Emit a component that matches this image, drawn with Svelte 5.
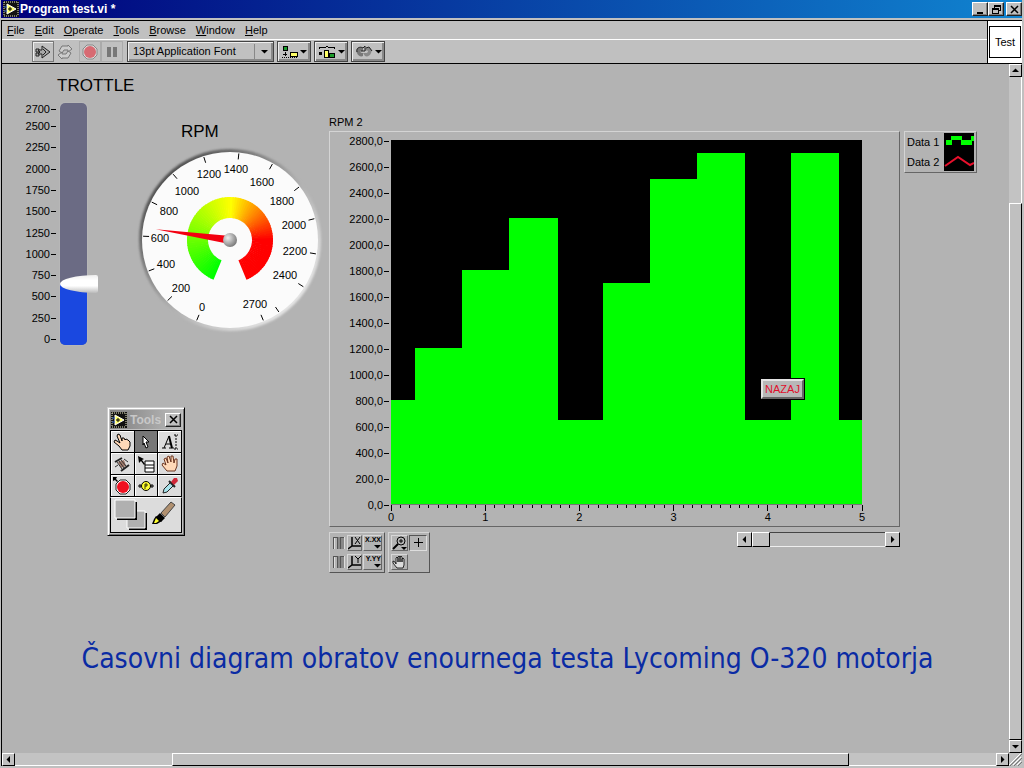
<script lang="ts">
  interface Point {
    x: number;
    y: number;
  }

  interface DialLabel extends Point {
    value: number;
  }

  const menus = ['File', 'Edit', 'Operate', 'Tools', 'Browse', 'Window', 'Help'];

  const MAX_RPM = 2700;
  let throttle = $state(650);

  // throttle scale
  const throttleMarks = [2700, 2500, 2250, 2000, 1750, 1500, 1250, 1000, 750, 500, 250, 0];
  const throttleY = (v: number) => Math.round(239 - (v / MAX_RPM) * 230);
  const fill = $derived(`${((6 + (throttle / MAX_RPM) * 230) / 242) * 100}%`);

  // dial, 315 degrees from 0 to 2700, angles measured from twelve o'clock
  const C = 98;
  const dialAngle = (v: number) => -157.5 + (v / MAX_RPM) * 315;
  const polar = (deg: number, r: number): Point => ({
    x: C + r * Math.sin((deg * Math.PI) / 180),
    y: C + r * Math.cos((deg * Math.PI) / 180) * -1,
  });

  const dialTicks = [0, 200, 400, 600, 800, 1000, 1200, 1400, 1600, 1800, 2000, 2200, 2400, 2600, 2700];
  const dialLabels: DialLabel[] = [
    { value: 0, x: 70, y: 165 },
    { value: 200, x: 49, y: 146 },
    { value: 400, x: 34, y: 122 },
    { value: 600, x: 28, y: 96 },
    { value: 800, x: 37, y: 69 },
    { value: 1000, x: 55, y: 49 },
    { value: 1200, x: 77, y: 32 },
    { value: 1400, x: 104, y: 27 },
    { value: 1600, x: 130, y: 40 },
    { value: 1800, x: 150, y: 59 },
    { value: 2000, x: 162, y: 83 },
    { value: 2200, x: 163, y: 109 },
    { value: 2400, x: 153, y: 133 },
    { value: 2700, x: 123, y: 162 },
  ];

  function rampColor(v: number) {
    if (v < 1350) return `rgb(${Math.round((v / 1350) * 255)}, 255, 0)`;
    const g = Math.max(0, 1 - (v - 1350) / 750);
    return `rgb(255, ${Math.round(g * 255)}, 0)`;
  }

  const ramp = Array.from({ length: 90 }, (_, i) => {
    const from = i * 30;
    const a = dialAngle(from);
    const b = dialAngle(Math.min(MAX_RPM, from + 40));
    const [p, q, r, s] = [polar(a, 43), polar(b, 43), polar(b, 22), polar(a, 22)];
    return {
      color: rampColor(from),
      d: `M${p.x} ${p.y}A43 43 0 0 1 ${q.x} ${q.y}L${r.x} ${r.y}A22 22 0 0 0 ${s.x} ${s.y}Z`,
    };
  });

  // graph: [start, end, rpm]
  const steps = [
    [0, 0.25, 800],
    [0.25, 0.75, 1200],
    [0.75, 1.25, 1800],
    [1.25, 1.77, 2200],
    [1.77, 2.25, 650],
    [2.25, 2.75, 1700],
    [2.75, 3.25, 2500],
    [3.25, 3.76, 2700],
    [3.76, 4.25, 650],
    [4.25, 4.76, 2700],
    [4.76, 5, 650],
  ];
  const area = `M0 2800${steps.map(([a, b, v]) => `L${a} ${2800 - v}L${b} ${2800 - v}`).join('')}L5 2800Z`;
  const yMarks = Array.from({ length: 15 }, (_, i) => `${2800 - i * 200},0`);
  const xMarks = [0, 1, 2, 3, 4, 5];
  const xTicks = Array.from({ length: 51 }, (_, i) => i);
</script>

{#snippet viIcon()}
  <svg class="vi" width="16" height="16" viewBox="0 0 16 16" aria-hidden="true">
    <rect width="16" height="16" fill="#111" />
    <path d="M1 1H15M1 15H15M1 1V15M15 1V15" stroke="#e8e8c0" stroke-dasharray="1 1" />
    <path d="M4 3L13 8L4 13Z" fill="#ffff66" stroke="#fff" />
    <path d="M5 8H9M7 6V10" stroke="#000" />
    <path d="M1 6H4M1 10H4" stroke="#36c" />
  </svg>
{/snippet}

{#snippet arrow(dir: string)}
  <svg width="7" height="7" viewBox="0 0 7 7" aria-hidden="true">
    {#if dir === 'up'}<path d="M0 5H7L3.5 1.5Z" />{/if}
    {#if dir === 'down'}<path d="M0 2H7L3.5 5.5Z" />{/if}
    {#if dir === 'left'}<path d="M5 0V7L1.5 3.5Z" />{/if}
    {#if dir === 'right'}<path d="M2 0V7L5.5 3.5Z" />{/if}
  </svg>
{/snippet}

{#snippet scrollbar(kind: string, before: number, size: number)}
  <div class="scroll {kind}">
    <button class="scroll-btn" aria-label="Scroll back">{@render arrow(kind === 'vert' ? 'up' : 'left')}</button>
    <div class="scroll-track">
      <div style:flex-grow={before}></div>
      <div class="thumb" style:flex-grow={size}></div>
      <div style:flex-grow={100 - before - size}></div>
    </div>
    <button class="scroll-btn" aria-label="Scroll forward">{@render arrow(kind === 'vert' ? 'down' : 'right')}</button>
  </div>
{/snippet}

<div class="window">
  <header class="titlebar">
    {@render viIcon()}
    <span class="title">Program test.vi *</span>
    <button class="win-btn" aria-label="Minimize">
      <svg width="9" height="9" viewBox="0 0 9 9"><path d="M1 7H7V9H1Z" /></svg>
    </button>
    <button class="win-btn" aria-label="Restore">
      <svg width="9" height="9" viewBox="0 0 9 9" shape-rendering="crispEdges">
        <path d="M2 0H9V6H7V5H8V2H3V3H2ZM0 3H7V9H0ZM1 5V8H6V5Z" fill-rule="evenodd" />
      </svg>
    </button>
    <button class="win-btn close" aria-label="Close">
      <svg width="9" height="9" viewBox="0 0 9 9"><path d="M1 1L8 8M8 1L1 8" stroke="#000" stroke-width="1.5" /></svg>
    </button>
  </header>

  <div class="body">
    <div class="bars">
      <div class="bars-main">
        <nav class="menubar">
          {#each menus as menu}
            <button class="menu"><u>{menu[0]}</u>{menu.slice(1)}</button>
          {/each}
        </nav>

        <div class="toolbar">
          <button class="tool" aria-label="Run">
            <svg width="16" height="14" viewBox="0 0 16 14">
              <path d="M1 4H4V7H1ZM1 8H4V11H1Z" fill="#a8a8a8" stroke="#222" />
              <path d="M3 5H7V1L15 7L7 13V9H3L5 7Z" fill="#a8a8a8" stroke="#222" />
              <path d="M8 4L11 7L8 10" fill="none" stroke="#222" />
            </svg>
          </button>
          <button class="tool flat" aria-label="Run continuously">
            <svg width="16" height="14" viewBox="0 0 16 14" fill="#ccc" stroke="#777">
              <path d="M2 6L5 1H11V0L15 4L11 7V5H7L5 8Z" />
              <path d="M14 8L11 13H5V14L1 10L5 7V9H9L11 6Z" />
            </svg>
          </button>
          <button class="tool dim" aria-label="Abort">
            <svg width="16" height="16" viewBox="0 0 16 16">
              <path d="M5 1H11L15 5V11L11 15H5L1 11V5Z" fill="#ddd" stroke="#888" />
              <circle cx="8" cy="8" r="6" fill="#d76a72" />
            </svg>
          </button>
          <button class="tool dim" aria-label="Pause">
            <svg width="12" height="12" viewBox="0 0 12 12"><path d="M1 1H5V11H1ZM7 1H11V11H7Z" fill="#777" /></svg>
          </button>
          <div class="font-box">
            <select aria-label="Text settings">
              <option>13pt Application Font</option>
            </select>
            <span class="font-arrow">{@render arrow('down')}</span>
          </div>
          <button class="tool drop" aria-label="Align objects">
            <svg width="16" height="14" viewBox="0 0 16 14" shape-rendering="crispEdges">
              <rect x="1" y="1" width="4" height="4" fill="#1c9c2c" stroke="#000" />
              <path d="M3 7V11M1 9H5" stroke="#000" />
              <rect x="8" y="7" width="7" height="4" fill="#ffff66" stroke="#000" />
              <path d="M0 12H15" stroke="#000" stroke-dasharray="1 1" />
            </svg>
            {@render arrow('down')}
          </button>
          <button class="tool drop" aria-label="Distribute objects">
            <svg width="18" height="14" viewBox="0 0 18 14" shape-rendering="crispEdges">
              <path d="M1 4V2H8L9 1L10 2H16V4" fill="none" stroke="#000" />
              <path d="M1 7H4V10H1Z" />
              <rect x="6" y="5" width="4" height="7" fill="#ffff66" stroke="#000" />
              <rect x="11" y="8" width="5" height="4" fill="#1c9c2c" stroke="#000" />
            </svg>
            {@render arrow('down')}
          </button>
          <button class="tool drop" aria-label="Reorder">
            <svg width="18" height="14" viewBox="0 0 18 14">
              <path d="M8 3C3 0 0 5 2 8C3 11 6 12 8 11V8C5 8 4 6 8 6Z" fill="#777" />
              <path d="M10 3C15 1 18 5 16 8C15 11 12 12 10 11L8 8H12C14 6 13 5 10 6Z" fill="#888" />
              <path d="M2 7C1 3 5 1 8 3L10 1V6H6M11 3L14 2L17 6" fill="none" stroke="#222" />
            </svg>
            {@render arrow('down')}
          </button>
        </div>
      </div>
      <div class="icon-pane"><span class="icon-box">Test</span></div>
    </div>

    <div class="pane">
      <main class="canvas">
        <div class="objects">
          <section class="throttle">
            <label class="heading" for="throttle">TROTTLE</label>
            <div class="throttle-body">
              <svg width="35" height="248" aria-hidden="true">
                {#each throttleMarks as mark}
                  <text class="mark" x="25" y={throttleY(mark) + 4} text-anchor="end">{mark}</text>
                  <rect x="26" y={throttleY(mark)} width="5" height="1" />
                {/each}
              </svg>
              <div class="lever">
                <div class="bar"><div class="bar-fill" style:height={fill}></div></div>
                <input id="throttle" type="range" min="0" max={MAX_RPM} step="10" bind:value={throttle} />
              </div>
            </div>
          </section>

          <section class="gauge">
            <h2 class="heading">RPM</h2>
            <svg width="194" height="196" viewBox="0 0 194 196">
              <defs>
                <linearGradient id="rim" x1="0" y1="0" x2="1" y2="1">
                  <stop offset="0.1" stop-color="#444" />
                  <stop offset="0.5" stop-color="#aaa" />
                  <stop offset="0.9" stop-color="#eee" />
                </linearGradient>
                <radialGradient id="hub" cx="0.35" cy="0.35" r="0.7">
                  <stop offset="0" stop-color="#eee" />
                  <stop offset="1" stop-color="#777" />
                </radialGradient>
                <filter id="soft"><feGaussianBlur stdDeviation="1" /></filter>
              </defs>
              <circle cx={C} cy={C} r="91" fill="url(#rim)" filter="url(#soft)" />
              <circle cx={C} cy={C} r="88" fill="#fbfbfb" />
              {#each ramp as seg}
                <path d={seg.d} fill={seg.color} />
              {/each}
              {#each dialTicks as tick}
                {@const a = polar(dialAngle(tick), 81)}
                {@const b = polar(dialAngle(tick), 87)}
                <line x1={a.x} y1={a.y} x2={b.x} y2={b.y} stroke="#000" />
              {/each}
              {#each dialLabels as label}
                <text class="mark" x={label.x} y={label.y + 4} text-anchor="middle">{label.value}</text>
              {/each}
              <path
                d="M{C} {C - 75}L{C + 4} {C}H{C - 4}Z"
                fill="#f30010"
                transform="rotate({dialAngle(throttle)} {C} {C})"
              />
              <circle cx={C} cy={C} r="7" fill="url(#hub)" />
            </svg>
          </section>

          <section class="graph">
            <h2 class="graph-name">RPM 2</h2>
            <div class="frame">
              <div class="y-axis">
                {#each yMarks as mark}<span>{mark}</span>{/each}
              </div>
              <div class="plot-col">
                <div class="plot">
                  <svg viewBox="0 0 5 2800" preserveAspectRatio="none" shape-rendering="crispEdges">
                    <path d={area} fill="#00ff00" />
                  </svg>
                  <button class="back">NAZAJ</button>
                </div>
                <svg class="x-ticks" viewBox="0 0 50 6" preserveAspectRatio="none" shape-rendering="crispEdges">
                  {#each xTicks as t}
                    <path d="M{t} 0V{t % 10 ? 3 : 6}" stroke="#000" vector-effect="non-scaling-stroke" />
                  {/each}
                </svg>
                <div class="x-axis">
                  {#each xMarks as mark}<span>{mark}</span>{/each}
                </div>
              </div>
            </div>

            <div class="graph-tools">
              <div class="palette scales">
                {#each ['X', 'Y'] as axis}
                  <button class="cell lock" aria-label="Lock {axis} scale">
                    <svg width="14" height="14" viewBox="0 0 14 14" shape-rendering="crispEdges">
                      <path d="M1 13V1H5V13M8 13V1H13" fill="none" stroke="#555" />
                      <path d="M6 1H8V13H6ZM9 2H12V13H9Z" fill="#888" />
                      <path d="M2 2V13M12 1V13" stroke="#ddd" />
                    </svg>
                  </button>
                  <button class="cell" aria-label="Autoscale {axis}">
                    <svg width="15" height="14" viewBox="0 0 15 14">
                      <path d="M5 1V10H14M5 10L1 13" fill="none" stroke="#000" stroke-width="1.5" />
                      {#if axis === 'X'}
                        <path d="M8 1L13 8M13 1L8 8" stroke="#000" />
                      {:else}
                        <path d="M8 1L11 4L14 1M11 4V8" fill="none" stroke="#000" />
                      {/if}
                    </svg>
                  </button>
                  <button class="cell wide">
                    <span class="tiny">{axis}.{axis}{axis}</span>
                    {@render arrow('down')}
                  </button>
                {/each}
              </div>
              <div class="palette view">
                <button class="cell" aria-label="Zoom">
                  <svg width="15" height="14" viewBox="0 0 15 14">
                    <circle cx="9" cy="5" r="4" fill="none" stroke="#000" />
                    <path d="M7 5H11M9 3V7" stroke="#000" />
                    <path d="M6 8L1 13" stroke="#000" stroke-width="2" />
                    <path d="M9 11H15L12 14Z" />
                  </svg>
                </button>
                <button class="cell sunken" aria-label="Cursor">
                  <svg width="14" height="14" viewBox="0 0 14 14" shape-rendering="crispEdges">
                    <path d="M3 6H12V7H3ZM7 2H8V11H7Z" />
                  </svg>
                </button>
                <button class="cell" aria-label="Pan">
                  <svg width="15" height="14" viewBox="0 0 15 14">
                    <path
                      d="M5 13L1 8V6L3 7L4 9V3L5 2L6 3V7V2L7 1L8 2V7V2L9 1L10 2V7V4L11 3L12 4V10L11 13Z"
                      fill="#ddd"
                      stroke="#000"
                      stroke-width="0.8"
                    />
                  </svg>
                </button>
              </div>
              <div class="graph-scroll">{@render scrollbar('inset', 0, 12)}</div>
            </div>
          </section>

          <aside class="legend">
            <div class="legend-names">
              <span>Data 1</span>
              <span>Data 2</span>
            </div>
            <svg width="30" height="40" viewBox="0 0 30 40">
              <rect y="1" width="30" height="38" fill="#000" />
              <path d="M2 8H7V4H18V8H27V4H30V9H28V13H17V8H8V13H2Z" fill="#00ff00" />
              <path d="M1 34L14 25L26 33L30 31" fill="none" stroke="#e8102c" stroke-width="2" />
            </svg>
          </aside>
        </div>

        <h1 class="caption">Časovni diagram obratov enournega testa Lycoming O-320 motorja</h1>

        <div class="tools-window">
          <div class="tools-title">
            {@render viIcon()}
            <span>Tools</span>
            <button class="win-btn" aria-label="Close tools">
              <svg width="9" height="9" viewBox="0 0 9 9"><path d="M1 1L8 8M8 1L1 8" stroke="#000" stroke-width="1.5" /></svg>
            </button>
          </div>
          <div class="tools-grid">
            <button aria-label="Operate value">
              <svg width="18" height="18" viewBox="0 0 18 18">
                <path
                  d="M5 1L7 2L9 8V5L11 5L12 7L13 6L15 7L17 9V13L15 17H9L6 13L1 9L2 7L4 8L7 10L4 3Z"
                  fill="#ffd9b8"
                  stroke="#000"
                />
              </svg>
            </button>
            <button class="on" aria-label="Position, size, select">
              <svg width="18" height="18" viewBox="0 0 18 18">
                <path d="M6 3L12 9H9L11 14L9 15L7 10L6 12Z" fill="#fff" stroke="#000" />
              </svg>
            </button>
            <button aria-label="Edit text">
              <svg width="18" height="18" viewBox="0 0 18 18">
                <path d="M1 15H5M8 15H13M3 15L8 3M5 11H10" fill="none" stroke="#000" />
                <path d="M8 3L11 15" stroke="#000" stroke-width="2" />
                <path d="M13 2H17M15 2V16M13 16H17" fill="none" stroke="#000" stroke-dasharray="2 1" />
              </svg>
            </button>
            <button aria-label="Connect wire">
              <svg width="18" height="18" viewBox="0 0 18 18">
                <path d="M5 7L11 5L13 11L8 13Z" fill="#a07868" />
                <path d="M2 7L9 3M8 16L16 10" stroke="#222" stroke-width="2" />
                <path d="M4 7L9 14M6 6L11 13M8 5L13 11M11 4L15 7M2 12L5 10" stroke="#333" />
              </svg>
            </button>
            <button aria-label="Object shortcut menu">
              <svg width="18" height="18" viewBox="0 0 18 18">
                <path d="M1 1L7 4L5 5L8 9L7 10L4 6L2 8Z" />
                <path d="M8 6H17V17H8ZM8 10H17M8 13H17" fill="#fff" stroke="#000" />
              </svg>
            </button>
            <button aria-label="Scroll window">
              <svg width="18" height="18" viewBox="0 0 18 18">
                <path
                  d="M6 16L1 10L2 8L5 10L3 4L5 3L7 8L6 2L8 1L10 7L10 1L12 1L13 8L14 4L16 4L16 11L14 16Z"
                  fill="#ffd9b8"
                  stroke="#6b3520"
                />
              </svg>
            </button>
            <button aria-label="Set breakpoint">
              <svg width="18" height="18" viewBox="0 0 18 18">
                <path d="M7 3H13L17 7V13L13 17H7L3 13V7Z" fill="#fff" stroke="#222" />
                <circle cx="10" cy="10" r="6" fill="#f01020" />
                <path d="M0 0H4L3 2L5 4L4 5L2 3L0 4Z" />
              </svg>
            </button>
            <button aria-label="Probe data">
              <svg width="18" height="18" viewBox="0 0 18 18">
                <path d="M1 9H17M3 7V11M15 7V11" stroke="#000" />
                <circle cx="9" cy="9" r="4.5" fill="#ffff30" stroke="#000" />
                <path d="M8 12V7H10V9H8" fill="none" stroke="#000" stroke-width="0.8" />
              </svg>
            </button>
            <button aria-label="Get color">
              <svg width="18" height="18" viewBox="0 0 18 18">
                <path d="M2 16L3 12L10 5L13 8L6 15Z" fill="#a8e4ec" stroke="#222" />
                <path d="M8 4L14 10" stroke="#222" stroke-width="2" />
                <path d="M10 5L13 1L16 1L17 4L13 8Z" fill="#d02838" />
              </svg>
            </button>
          </div>
          <button class="color-tool" aria-label="Set color">
            <svg width="66" height="34" viewBox="0 0 66 34">
              <path d="M17 15H35V32H17Z" fill="#000" />
              <path d="M15 13H33V30H15Z" fill="#b0b0b0" stroke="#fff" />
              <path d="M5 4H25V22H5Z" fill="#000" />
              <path d="M3 2H23V20H3Z" fill="#b0b0b0" stroke="#fff" />
              <path d="M49 15L59 4L63 7L53 19Z" fill="#b09070" stroke="#444" />
              <path d="M48 15L53 20L49 24L44 19Z" fill="#000" />
              <path d="M44 18L50 23L45 26H40L42 21Z" fill="#000" />
              <path d="M44 20L47 23L44 25H42Z" fill="#ffff30" />
            </svg>
          </button>
        </div>
      </main>

      {@render scrollbar('vert', 19, 81)}
      {@render scrollbar('horiz', 16, 69)}
      <div class="grip">
        <svg width="13" height="13" viewBox="0 0 13 13">
          <path d="M1 13L13 1M5 13L13 5M9 13L13 9" stroke="#777" />
          <path d="M0 12L12 0M4 12L12 4M8 12L12 8" stroke="#fff" />
        </svg>
      </div>
    </div>
  </div>
</div>

<style>
  :global(body) {
    margin: 0;
    background: #c0c0c0;
  }

  .window {
    display: flex;
    flex-direction: column;
    min-height: 100vh;
    box-sizing: border-box;
    padding: 0 2px 2px 1px;
    background: #c0c0c0;
    font-family: 'Liberation Sans', Arial, sans-serif;
    font-size: 11px;
    color: #000;
  }

  button {
    box-sizing: border-box;
    padding: 0;
    border: 0;
    background: none;
    font: inherit;
    color: inherit;
  }

  svg {
    display: block;
    flex-shrink: 0;
  }

  h1,
  h2 {
    margin: 0;
    font-weight: normal;
  }

  .titlebar {
    display: flex;
    align-items: center;
    height: 18px;
    padding: 0 0 0 2px;
    margin-bottom: 2px;
    background: linear-gradient(to right, #00007b, #1084d0);
  }

  .title {
    flex: 1;
    padding-left: 1px;
    font-size: 12px;
    font-weight: bold;
    color: #fff;
  }

  .win-btn {
    display: grid;
    place-items: center;
    width: 16px;
    height: 14px;
    background: #c0c0c0;
    border: 1px solid;
    border-color: #fff #222 #222 #fff;
    box-shadow: inset -1px -1px #808080;
  }

  .close {
    margin-left: 2px;
  }

  .body {
    display: flex;
    flex-direction: column;
    flex: 1;
    border-top: 1px solid #000;
    border-left: 1px solid #000;
  }

  .bars {
    display: flex;
    border-bottom: 1px solid #000;
  }

  .bars-main {
    flex: 1;
  }

  .menubar {
    display: flex;
    align-items: center;
    gap: 10px;
    height: 18px;
    padding-left: 5px;
    border-bottom: 1px solid #fff;
  }

  .toolbar {
    display: flex;
    align-items: center;
    height: 23px;
    padding-left: 30px;
  }

  .tool {
    display: flex;
    align-items: center;
    justify-content: center;
    width: 22px;
    height: 21px;
    border: 1px solid;
    border-color: #eee #444 #444 #eee;
    outline: 1px solid #777;
    outline-offset: -1px;
    box-shadow: inset 1px 1px #eee;
  }

  .flat {
    outline: none;
    border-color: transparent;
    box-shadow: none;
  }

  .dim {
    outline-color: #aaa;
    border-color: #ccc;
    box-shadow: none;
  }

  .flat + .dim {
    margin-left: 3px;
  }

  .drop {
    gap: 2px;
    width: 34px;
    margin-left: 3px;
    outline-color: #444;
    box-shadow: inset 1px 1px #eee, inset -2px -2px #888;
  }

  .font-box {
    display: grid;
    align-items: center;
    width: 147px;
    height: 21px;
    margin-left: 4px;
  }

  .font-box > * {
    grid-area: 1 / 1;
  }

  .font-box select {
    width: 100%;
    height: 21px;
    padding: 0 0 2px 5px;
    appearance: none;
    background: #c0c0c0;
    border: 1px solid #444;
    border-radius: 0;
    box-shadow: inset 1px 1px #eee, inset -2px -2px #888;
    font: inherit;
    color: inherit;
  }

  .font-arrow {
    justify-self: end;
    padding: 4px 6px;
    border-left: 1px solid #888;
    pointer-events: none;
  }

  .icon-pane {
    display: grid;
    place-items: center;
    width: 34px;
    background: #fff;
    border-left: 1px solid #000;
  }

  .icon-box {
    width: 30px;
    border: 1px solid #000;
    line-height: 30px;
    text-align: center;
  }

  .pane {
    display: grid;
    flex: 1;
    grid-template-columns: 1fr 13px;
    grid-template-rows: 1fr 13px;
  }

  .canvas {
    position: relative;
    padding-top: 12px;
    background: #b3b3b3;
  }

  .objects {
    display: flex;
    align-items: flex-start;
    padding: 0 32px 0 23px;
  }

  .heading {
    display: block;
    font-size: 17px;
    line-height: 20px;
  }

  .mark {
    font-size: 11px;
  }

  .throttle {
    width: 107px;
  }

  .throttle .heading {
    padding-left: 32px;
  }

  .throttle-body {
    display: flex;
    padding-top: 4px;
  }

  .lever {
    display: grid;
    width: 38px;
    height: 248px;
  }

  .lever > * {
    grid-area: 1 / 1;
  }

  .bar {
    display: flex;
    flex-direction: column;
    justify-content: flex-end;
    width: 27px;
    margin: 3px 0;
    overflow: hidden;
    border-radius: 5px;
    background: #6b6b84;
    box-shadow: 0 0 1px #ddd;
  }

  .bar-fill {
    background: #1a48e0;
  }

  .lever input {
    width: 38px;
    height: 248px;
    margin: 0;
    appearance: none;
    background: none;
    writing-mode: vertical-lr;
    direction: rtl;
  }

  .lever input::-webkit-slider-thumb {
    appearance: none;
    width: 38px;
    height: 18px;
    border-radius: 36px 2px 2px 36px / 9px 2px 2px 9px;
    background: linear-gradient(#eee, #fff 30%, #fff 60%, #bbb);
  }

  .gauge {
    padding-top: 46px;
  }

  .gauge .heading {
    padding-left: 49px;
  }

  .graph {
    flex: 1;
    min-width: 0;
    padding: 39px 4px 0 3px;
  }

  .graph-name {
    padding-bottom: 2px;
    font-size: 11px;
    line-height: 14px;
  }

  .frame {
    display: flex;
    padding: 2px 37px 2px 0;
    border: 1px solid;
    border-color: #d4d4d4 #666 #666 #d4d4d4;
  }

  .y-axis {
    display: flex;
    flex-direction: column;
    justify-content: space-between;
    width: 59px;
    height: 378px;
    padding-right: 2px;
  }

  .y-axis span {
    display: flex;
    align-items: center;
    justify-content: flex-end;
    gap: 1px;
    line-height: 14px;
  }

  .y-axis span::after {
    content: '';
    width: 5px;
    height: 1px;
    background: #000;
  }

  .plot-col {
    flex: 1;
    padding-top: 6px;
  }

  .plot {
    position: relative;
    height: 364px;
    background: #000;
    border-bottom: 1px solid #777;
  }

  .plot > svg {
    width: 100%;
    height: 100%;
  }

  .back {
    position: absolute;
    top: 239px;
    right: 58px;
    width: 43px;
    height: 20px;
    background: #b8b8b8;
    border: 2px solid;
    border-color: #e4e4e4 #666 #666 #e4e4e4;
    outline: 1px solid #000;
    line-height: 16px;
    color: #e0102c;
  }

  .x-ticks {
    width: 100%;
    height: 6px;
    overflow: visible;
  }

  .x-axis {
    display: flex;
    justify-content: space-between;
    margin: 0 -10px;
    line-height: 13px;
  }

  .x-axis span {
    width: 20px;
    text-align: center;
  }

  .graph-tools {
    display: flex;
    align-items: flex-start;
    gap: 3px;
    padding-top: 5px;
  }

  .palette {
    display: grid;
    gap: 3px 1px;
    padding: 2px;
    border: 1px solid;
    border-color: #d4d4d4 #555 #555 #d4d4d4;
  }

  .scales {
    grid-template-columns: 14px 15px 19px;
  }

  .view {
    grid-template-columns: 17px 18px;
  }

  .cell {
    display: flex;
    align-items: center;
    justify-content: center;
    height: 16px;
    border: 1px solid;
    border-color: #d8d8d8 #666 #666 #d8d8d8;
    overflow: hidden;
  }

  .lock {
    border-color: transparent;
  }

  .sunken {
    border-color: #555 #ddd #ddd #555;
  }

  .wide {
    flex-direction: column;
    align-items: flex-end;
  }

  .tiny {
    font-size: 7px;
    font-weight: bold;
    line-height: 7px;
  }

  .graph-scroll {
    width: 163px;
    margin-left: auto;
  }

  .legend {
    display: flex;
    justify-content: space-between;
    width: 73px;
    box-sizing: border-box;
    margin-top: 55px;
    padding: 0 2px;
    border: 1px solid;
    border-color: #d4d4d4 #666 #666 #d4d4d4;
  }

  .legend-names {
    display: flex;
    flex-direction: column;
    line-height: 20px;
    white-space: nowrap;
  }

  .caption {
    padding: 68px 0 0 4px;
    font-family: 'DejaVu Sans Condensed', 'Noto Sans', sans-serif;
    font-size: 28px;
    line-height: 36px;
    text-align: center;
    color: #0a2ba4;
  }

  .tools-window {
    position: absolute;
    top: 343px;
    left: 105px;
    width: 78px;
    box-sizing: border-box;
    padding: 2px;
    background: #c0c0c0;
    border: 1px solid;
    border-color: #ccc #000 #000 #ccc;
    box-shadow: inset 1px 1px #fff, inset -1px -1px #777;
  }

  .tools-title {
    display: flex;
    align-items: center;
    height: 19px;
    margin-bottom: 1px;
    padding: 0 1px;
    background: linear-gradient(to right, #808080, #bbb);
  }

  .tools-title span {
    flex: 1;
    width: 0;
    padding-left: 3px;
    overflow: hidden;
    font-size: 12px;
    font-weight: bold;
    color: #c8c8c8;
  }

  .tools-grid {
    display: grid;
    grid-template-columns: repeat(3, 1fr);
    gap: 1px;
    padding: 1px;
    background: #000;
  }

  .tools-grid button {
    display: grid;
    place-items: center;
    height: 21px;
    background: #dcdcdc;
    box-shadow: inset 1px 1px #fff;
  }

  .tools-grid .on {
    background: #777;
    box-shadow: none;
  }

  .color-tool {
    display: block;
    width: 100%;
    padding: 0 1px;
    background: #dcdcdc;
    border: 1px solid;
    border-color: #fff #000 #000;
  }

  .scroll {
    display: flex;
    background: #c3c3c3;
  }

  .scroll-btn {
    display: grid;
    place-items: center;
    flex: none;
    width: 13px;
    height: 13px;
    background: #c0c0c0;
    border: 1px solid;
    border-color: #fff #000 #000 #fff;
  }

  .scroll-track {
    display: flex;
    flex: 1;
  }

  .thumb {
    background: #c0c0c0;
    border: 1px solid;
    border-color: #fff #000 #000 #fff;
  }

  .vert,
  .vert .scroll-track {
    flex-direction: column;
  }

  .vert .scroll-track {
    box-shadow: inset -1px 0 #fff;
  }

  .horiz .scroll-track {
    box-shadow: inset 0 -1px #fff;
  }

  .inset {
    background: #b8b8b8;
    box-shadow: inset 0 1px #444, inset 0 -1px #eee;
  }

  .inset .scroll-btn {
    width: 15px;
    height: 15px;
  }

  .grip {
    background: #c0c0c0;
  }
</style>
